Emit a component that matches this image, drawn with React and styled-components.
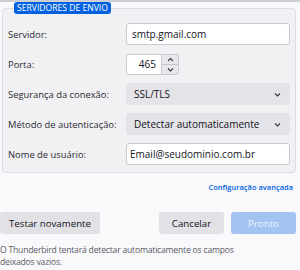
import React from "react";
import styled, { createGlobalStyle } from "styled-components";

const Global = createGlobalStyle`
  html, body { margin: 0; padding: 0; }
  body {
    width: 300px; height: 270px; overflow: hidden;
    background: #f9f9fb;
    font-family: "Open Sans", "Noto Sans", sans-serif;
    color: #15141a;
  }
`;

const Page = styled.div`
  border-top: 2px solid #cfcfd8;
  height: 268px;
  box-sizing: border-box;
  padding: 0 4px 0 2px;
  display: flex;
  flex-direction: column;
`;

const Fieldset = styled.fieldset`
  margin: 0;
  padding: 9px 5px 7px 5px;
  border: 1px solid #dcdce2;
  border-radius: 4px;
  background: #f1f1f4;
  display: grid;
  grid-template-columns: 118px 1fr;
  grid-auto-rows: 22px;
  row-gap: 8px;
  align-items: center;
  min-width: 0;
`;

const Legend = styled.legend`
  background: #0061e0;
  color: #fff;
  font-size: 8.6px;
  line-height: 12px;
  padding: 0 3px;
  margin-left: 6px;
  border-radius: 3px;
  white-space: nowrap;
`;

const Label = styled.label`
  font-size: 9.4px;
  color: #2b2a33;
  white-space: nowrap;
`;

const TextInput = styled.div`
  height: 22px;
  box-sizing: border-box;
  background: #fff;
  border: 1px solid #c8c8ce;
  border-radius: 3px;
  font-size: 10px;
  display: flex;
  align-items: center;
  padding: 0 ${(p) => (p.$pad ? p.$pad : 5)}px;
  color: #15141a;
  white-space: nowrap;
`;

const PortWrap = styled.div`
  display: flex;
  align-items: stretch;
  height: 21px;
`;

const PortInput = styled(TextInput)`
  width: 36px;
  height: 21px;
  justify-content: flex-end;
  padding-right: 5px;
  border-radius: 3px 0 0 3px;
`;

const Spinner = styled.div`
  width: 17px;
  display: flex;
  flex-direction: column;
  border: 1px solid #c8c8ce;
  border-left: none;
  border-radius: 0 3px 3px 0;
  background: #e8e8ec;
  box-sizing: border-box;
`;

const SpinBtn = styled.div`
  flex: 1;
  display: flex;
  align-items: center;
  justify-content: center;
  border-top: ${(p) => (p.$bottom ? "1px solid #c8c8ce" : "none")};
`;

const Select = styled.div`
  height: 22px;
  box-sizing: border-box;
  background: #e3e3e8;
  border-radius: 3px;
  font-size: 10px;
  display: flex;
  align-items: center;
  justify-content: space-between;
  padding: 0 9px 0 8px;
  color: #15141a;
  white-space: nowrap;
`;

const LinkRow = styled.div`
  display: flex;
  justify-content: flex-end;
  padding: 9px 3px 0 0;
  line-height: 10px;
`;

const Link = styled.span`
  font-size: 7.5px;
  color: #0061e0;
  font-weight: 600;
`;

const ButtonRow = styled.div`
  display: flex;
  align-items: center;
  margin-top: 20px;
  margin-left: -2px;
`;

const Button = styled.div`
  height: 22px;
  box-sizing: border-box;
  width: ${(p) => p.$w}px;
  border-radius: 3px;
  background: ${(p) => (p.$primary ? "#a3c4f3" : "#e1e1e6")};
  color: ${(p) => (p.$primary ? "#eef4fd" : "#15141a")};
  font-size: 9.7px;
  display: flex;
  align-items: center;
  justify-content: center;
  white-space: nowrap;
  margin-left: ${(p) => p.$ml || 0}px;
`;

const Spacer = styled.div`
  flex: 1;
`;

const Note = styled.p`
  margin: 10px 0 0 -2px;
  font-size: 8.6px;
  letter-spacing: -0.2px;
  line-height: 12px;
  color: #5b5b66;
`;

const Chevron = ({ up }) => (
  <svg width="7" height="5" viewBox="0 0 7 5">
    <path
      d={up ? "M1 4 L3.5 1.5 L6 4" : "M1 1.5 L3.5 4 L6 1.5"}
      fill="none"
      stroke="#3a3944"
      strokeWidth="1.1"
    />
  </svg>
);

export default function App() {
  return (
    <>
      <Global />
      <Page>
        <Fieldset>
          <Legend>SERVIDORES DE ENVIO</Legend>
          <Label>Servidor:</Label>
          <TextInput>smtp.gmail.com</TextInput>
          <Label>Porta:</Label>
          <PortWrap>
            <PortInput>465</PortInput>
            <Spinner>
              <SpinBtn><Chevron up /></SpinBtn>
              <SpinBtn $bottom><Chevron /></SpinBtn>
            </Spinner>
          </PortWrap>
          <Label>Segurança da conexão:</Label>
          <Select>
            SSL/TLS
            <Chevron />
          </Select>
          <Label>Método de autenticação:</Label>
          <Select>
            Detectar automaticamente
            <Chevron />
          </Select>
          <Label>Nome de usuário:</Label>
          <TextInput $pad={3}>Email@seudominio.com.br</TextInput>
        </Fieldset>
        <LinkRow>
          <Link>Configuração avançada</Link>
        </LinkRow>
        <ButtonRow>
          <Button $w={100}>Testar novamente</Button>
          <Spacer />
          <Button $w={65}>Cancelar</Button>
          <Button $w={65} $ml={7} $primary>Pronto</Button>
        </ButtonRow>
        <Note>
          O Thunderbird tentará detectar automaticamente os campos
          <br />
          deixados vazios.
        </Note>
      </Page>
    </>
  );
}
